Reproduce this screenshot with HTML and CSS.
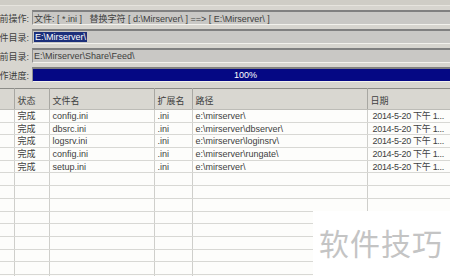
FILE: index.html
```html
<!DOCTYPE html>
<html lang="zh">
<head>
  <meta charset="UTF-8">
  <title>批量替换</title>
  <link rel="stylesheet" href="styles.css">
</head>
<body>
  <div class="tool-strip"></div>

  <div class="tool-form">
    <div class="tool-label"><span>当前操作:</span></div>
    <div class="tool-field">文件: [ *.ini ]&nbsp;&nbsp; 替换字符 [ d:\Mirserver\ ] ==&gt; [ E:\Mirserver\ ]</div>

    <div class="tool-label"><span>文件目录:</span></div>
    <div class="tool-field"><span class="tool-selected">E:\Mirserver\</span></div>

    <div class="tool-label"><span>当前目录:</span></div>
    <div class="tool-field">E:\Mirserver\Share\Feed\</div>

    <div class="tool-label"><span>操作进度:</span></div>
    <div class="tool-progress">100%</div>
  </div>

  <table class="tool-list">
    <colgroup>
      <col style="width:14px">
      <col style="width:35px">
      <col style="width:105px">
      <col style="width:38px">
      <col style="width:175px">
      <col>
    </colgroup>
    <thead>
      <tr><th></th><th>状态</th><th>文件名</th><th>扩展名</th><th>路径</th><th>日期</th></tr>
    </thead>
    <tbody>
      <tr><td></td><td>完成</td><td>config.ini</td><td>.ini</td><td>e:\mirserver\</td><td>2014-5-20 下午 1...</td></tr>
      <tr><td></td><td>完成</td><td>dbsrc.ini</td><td>.ini</td><td>e:\mirserver\dbserver\</td><td>2014-5-20 下午 1...</td></tr>
      <tr><td></td><td>完成</td><td>logsrv.ini</td><td>.ini</td><td>e:\mirserver\loginsrv\</td><td>2014-5-20 下午 1...</td></tr>
      <tr><td></td><td>完成</td><td>config.ini</td><td>.ini</td><td>e:\mirserver\rungate\</td><td>2014-5-20 下午 1...</td></tr>
      <tr><td></td><td>完成</td><td>setup.ini</td><td>.ini</td><td>e:\mirserver\</td><td>2014-5-20 下午 1...</td></tr>
      <tr><td></td><td></td><td></td><td></td><td></td><td></td></tr>
      <tr><td></td><td></td><td></td><td></td><td></td><td></td></tr>
      <tr><td></td><td></td><td></td><td></td><td></td><td></td></tr>
      <tr><td></td><td></td><td></td><td></td><td></td><td></td></tr>
      <tr><td></td><td></td><td></td><td></td><td></td><td></td></tr>
      <tr><td></td><td></td><td></td><td></td><td></td><td></td></tr>
      <tr><td></td><td></td><td></td><td></td><td></td><td></td></tr>
      <tr><td></td><td></td><td></td><td></td><td></td><td></td></tr>
      <tr><td></td><td></td><td></td><td></td><td></td><td></td></tr>
    </tbody>
  </table>

  <div class="tool-watermark">软件技巧</div>
</body>
</html>
```

FILE: styles.css
```css
html,
body {
  margin: 0;
  height: 100%;
  overflow: hidden;
}

body {
  position: relative;
  background-color: #d7d5cf;
  color: #404040;
  font-family: "Liberation Sans", "Noto Sans CJK SC", sans-serif;
  font-size: 9px;
}

.tool-strip {
  height: 5px;
  background-color: #cfcdc6;
  border-bottom: 1px solid #e6e4de;
}

.tool-form {
  display: grid;
  grid-template-columns: 29px 1fr;
  grid-auto-rows: 15px;
  column-gap: 3px;
  row-gap: 4px;
  padding-top: 4px;
}

.tool-label {
  display: flex;
  justify-content: flex-end;
  align-items: center;
  overflow: hidden;
  white-space: nowrap;
  padding-top: 2px;
}

.tool-field,
.tool-progress {
  box-sizing: border-box;
  display: flex;
  align-items: center;
  white-space: nowrap;
  border-top: 2px solid #808080;
  border-left: 1px solid #909090;
  border-bottom: 1px solid #f2f1ec;
  background-color: #c9c8c5;
  padding-left: 1px;
}

.tool-selected {
  background-color: #1c2f7a;
  color: #ffffff;
  padding: 0 1px;
}

.tool-progress {
  justify-content: center;
  background-color: #050884;
  color: #ffffff;
  padding-left: 8px;
}

.tool-list {
  margin-top: 6px;
  width: 470px;
  table-layout: fixed;
  border-collapse: collapse;
  background-color: #fdfdfb;
  border-top: 1px solid #8c8c88;
  border-bottom: 1px solid #6e6e6a;
}

.tool-list th {
  height: 18px;
  background-color: #d9d7d1;
  font-weight: normal;
  text-align: left;
  padding: 2px 0 0 3px;
  border-right: 1px solid #a8a7a2;
  border-bottom: 1px solid #bdbcb7;
  white-space: nowrap;
  overflow: hidden;
}

.tool-list td {
  height: 11.7px;
  padding: 0 0 0 3px;
  line-height: 10px;
  border-right: 1px solid #cfcfcb;
  border-bottom: 1px solid #d8d8d4;
  white-space: nowrap;
  overflow: hidden;
}

.tool-list td:nth-child(6) {
  padding-left: 5px;
  letter-spacing: -0.3px;
}

.tool-watermark {
  position: absolute;
  left: 313px;
  top: 211px;
  right: 0;
  bottom: 0;
  background-color: #ffffff;
  color: #c4c4c4;
  font-family: "Noto Sans CJK SC", sans-serif;
  font-size: 30px;
  letter-spacing: 1px;
  padding: 9px 0 0 6px;
}
```
